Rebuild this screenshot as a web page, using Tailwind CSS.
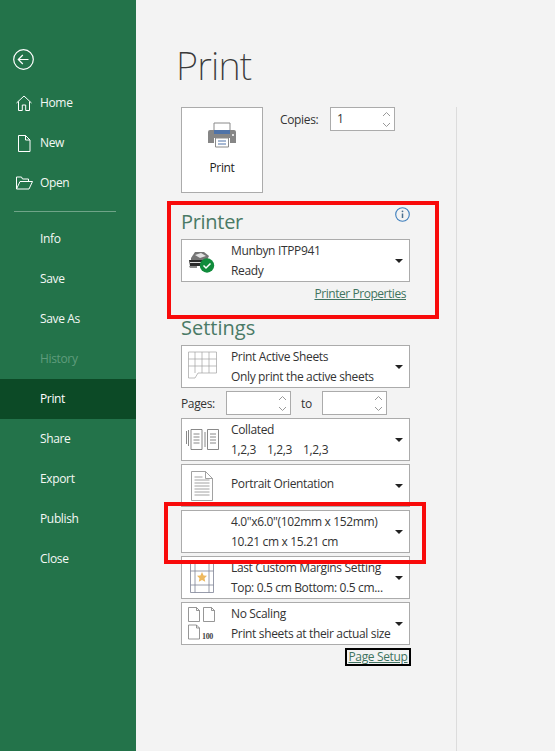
<!DOCTYPE html>
<html lang="en">
<head>
<meta charset="UTF-8">
<title>Print</title>
<script src="https://cdn.jsdelivr.net/npm/@tailwindcss/browser@4"></script>
</head>
<body class="h-[751px] w-[555px] overflow-hidden bg-[#f3f3f3] font-['Open_Sans','Noto_Sans',sans-serif] text-[12px] tracking-[-0.35px] whitespace-nowrap text-[#333]">
<div class="relative flex h-full">

  <!-- sidebar -->
  <nav class="flex h-full w-[136px] shrink-0 flex-col bg-[#23734a] text-[#f4f8f5]">
    <div class="flex h-[83px] items-end pb-[13px] pl-[13px]">
      <svg width="21" height="21" viewBox="0 0 21 21" fill="none" stroke="#fff" stroke-width="1.2"><circle cx="10.5" cy="10.5" r="9.8"/><path d="M15.5 10.5H5.5M9.8 6 5.3 10.5 9.8 15"/></svg>
    </div>
    <a class="flex h-[40px] items-center"><span class="flex w-[40px] pl-[16px]"><svg width="16" height="16" viewBox="0 0 16 16" fill="none" stroke="#fff" stroke-width="1"><path d="M.5 8 8 1l7.500 7M2.500 6.500v9h3.800V10h3.400v5.500h3.800v-9"/></svg></span>Home</a>
    <a class="flex h-[40px] items-center"><span class="flex w-[40px] pl-[17px]"><svg width="14" height="17" viewBox="0 0 14 17" fill="none" stroke="#fff" stroke-width="1"><path d="M1.500 .5h7l4.500 4.500v11.500H1.500zM8.500 .5V5H13"/></svg></span>New</a>
    <a class="flex h-[40px] items-center"><span class="flex w-[40px] pl-[16px]"><svg width="17" height="14" viewBox="0 0 17 14" fill="none" stroke="#fff" stroke-width="1"><path d="M.5 13V1h5l1 2h6v2.500M.5 13h12.500L16.500 5.500H4L.5 13Z"/></svg></span>Open</a>
    <hr class="ml-[14px] mr-[20px] mt-[8px] border-t border-[#6fa488]">
    <div class="flex flex-col pl-[40px] pt-[7px]">
      <a class="flex h-[40px] items-center">Info</a>
      <a class="flex h-[40px] items-center">Save</a>
      <a class="flex h-[40px] items-center">Save As</a>
      <a class="flex h-[40px] items-center text-[#5f9c7c]">History</a>
    </div>
    <a class="flex h-[40px] items-center bg-[#0c4a26] pl-[40px] text-white">Print</a>
    <div class="flex flex-col pl-[40px]">
      <a class="flex h-[40px] items-center">Share</a>
      <a class="flex h-[40px] items-center">Export</a>
      <a class="flex h-[40px] items-center">Publish</a>
      <a class="flex h-[40px] items-center">Close</a>
    </div>
  </nav>

  <!-- main -->
  <main class="flex min-w-0 flex-1 flex-col pl-[41px]">
    <h1 class="-ml-[1px] h-[107px] pt-[35px] font-['Noto_Sans',sans-serif] text-[38px] leading-[60px] font-extralight tracking-[-0.8px] text-[#3a3a3a]">Print</h1>
    <div class="flex-1 w-[280px] border-r border-[#dcdcdc] pl-[4px]">

      <div class="flex">
        <button class="flex h-[86px] w-[82px] flex-col items-center border border-[#ababab] bg-white pt-[14px]">
          <svg width="28" height="26" viewBox="0 0 28 26"><path d="M6 1h16v9H6z" fill="#fff" stroke="#8a8a8a"/><path d="M2 8h24a2 2 0 0 1 2 2v11h-6v-5H6v5H0V10a2 2 0 0 1 2-2z" fill="#868686"/><path d="M6 8h16v4H6z" fill="#4f73a8"/><path d="M7.500 16h13v9h-13z" fill="#fff" stroke="#8a8a8a"/><path d="M10 19h8M10 22h8" stroke="#4f73a8"/><circle cx="25" cy="13" r="1" fill="#fff"/></svg>
          <span class="mt-[11px] text-[#222]">Print</span>
        </button>
        <div class="ml-[17px] flex h-[24px] items-center">
          <span class="w-[50px] pt-[2px]">Copies:</span>
          <div class="flex h-[24px] w-[65px] items-center justify-between border border-[#ababab] bg-white pl-[6px] pr-[3px]">
            <span>1</span>
            <svg width="9" height="19" viewBox="0 0 9 19" fill="none" stroke="#999"><path d="M1 6 4.500 2.500 8 6M1 13l3.500 3.500L8 13"/></svg>
          </div>
        </div>
      </div>

      <h2 class="mt-[16px] h-[30px] text-[20px] leading-[26px] tracking-[-0.3px] text-[#4a7a66]">Printer</h2>
      <button class="flex h-[43px] w-[229px] items-center border border-[#ababab] bg-white text-left">
        <span class="flex w-[49px] justify-center pr-[9px] pt-[2px]">
          <svg width="28" height="22" viewBox="0 0 28 22"><path d="M3 7 7 1h9l5 4-2 4H3z" fill="#757575"/><path d="M7 4l6-2 5 3-6 2z" fill="#e2e2e2"/><path d="M1 9h17v6H2z" fill="#2a2a2a"/><path d="M2 11.500h13" stroke="#dedede"/><path d="M1 15h8v2H2z" fill="#8a8a8a"/><circle cx="19" cy="14.500" r="7.200" fill="#118c3c"/><path d="M15.500 14.500l2.500 2.500 4.500-4.500" stroke="#fff" stroke-width="1.500" fill="none"/></svg>
        </span>
        <span class="flex-1 leading-[20px]"><span class="block">Munbyn ITPP941</span><span class="block">Ready</span></span>
        <svg class="mr-[6px]" width="8" height="4" viewBox="0 0 8 4"><path d="M0 0h8L4 4z" fill="#222"/></svg>
      </button>
      <div class="flex h-[21px] w-[225px] items-end justify-end"><a class="tracking-[-0.45px] text-[#3f7360] underline">Printer Properties</a></div>

      <h2 class="mt-[12px] h-[30px] text-[20px] leading-[26px] tracking-normal text-[#4a7a66]">Settings</h2>
      <button class="flex h-[43px] w-[229px] items-center border border-[#ababab] bg-white text-left">
        <span class="flex w-[49px] justify-center pr-[9px]">
          <svg width="29" height="32" viewBox="0 0 29 32" fill="none" stroke="#a0a0a0" stroke-width=".7"><path d="M.5 1h28v21H10l-3 5H.5zM.5 8h28M.5 15h28M7 1v21M14 1v21M21 1v21"/></svg>
        </span>
        <span class="flex-1 leading-[20px]"><span class="block">Print Active Sheets</span><span class="block">Only print the active sheets</span></span>
        <svg class="mr-[6px]" width="8" height="4" viewBox="0 0 8 4"><path d="M0 0h8L4 4z" fill="#222"/></svg>
      </button>
      <div class="flex h-[30px] items-center">
        <span class="w-[45px] pt-[2px]">Pages:</span>
        <div class="flex h-[24px] w-[65px] items-center justify-end border border-[#ababab] bg-white pr-[3px]"><svg width="9" height="19" viewBox="0 0 9 19" fill="none" stroke="#999"><path d="M1 6 4.500 2.500 8 6M1 13l3.500 3.500L8 13"/></svg></div>
        <span class="w-[31px] pt-[2px] text-center">to</span>
        <div class="flex h-[24px] w-[65px] items-center justify-end border border-[#ababab] bg-white pr-[3px]"><svg width="9" height="19" viewBox="0 0 9 19" fill="none" stroke="#999"><path d="M1 6 4.500 2.500 8 6M1 13l3.500 3.500L8 13"/></svg></div>
      </div>
      <button class="flex h-[43px] w-[229px] items-center border border-[#ababab] bg-white text-left">
        <span class="flex w-[49px] justify-center pr-[9px]">
          <svg width="33" height="21" viewBox="0 0 33 21" fill="none" stroke="#7c7c7c" stroke-width=".9"><path d="M.5 2v13M2.500 1v16M5 .5h11v20H5zM7.500 5h6M7.500 8h6M7.500 11h6M7.500 14h6M19 3v15M21.500 .5h11v20h-11zM24 5h6M24 8h6M24 11h6M24 14h6"/></svg>
        </span>
        <span class="flex-1 leading-[20px]"><span class="block">Collated</span><span class="flex gap-[11px]"><span>1,2,3</span><span>1,2,3</span><span>1,2,3</span></span></span>
        <svg class="mr-[6px]" width="8" height="4" viewBox="0 0 8 4"><path d="M0 0h8L4 4z" fill="#222"/></svg>
      </button>
      <button class="mt-[3px] flex h-[43px] w-[229px] items-center border border-[#ababab] bg-white text-left">
        <span class="flex w-[49px] justify-center pr-[9px]">
          <svg width="22" height="30" viewBox="0 0 22 30" fill="none" stroke="#8a8a8a" stroke-width=".8"><path d="M.5 .5h14l7 7v22H.5zM14.500 .5v7h7M3.500 6h8M3.500 9h15M3.500 12h15M3.500 15h15M3.500 18h15M3.500 21h15M3.500 24h15"/></svg>
        </span>
        <span class="flex-1 pb-[4px]">Portrait Orientation</span>
        <svg class="mr-[6px]" width="8" height="4" viewBox="0 0 8 4"><path d="M0 0h8L4 4z" fill="#222"/></svg>
      </button>
      <button class="mt-[3px] flex h-[43px] w-[229px] items-center border border-[#ababab] bg-white text-left">
        <span class="w-[49px]"></span>
        <span class="flex-1 leading-[20px]"><span class="block">4.0"x6.0"(102mm x 152mm)</span><span class="block">10.21 cm x 15.21 cm</span></span>
        <svg class="mr-[6px]" width="8" height="4" viewBox="0 0 8 4"><path d="M0 0h8L4 4z" fill="#222"/></svg>
      </button>
      <button class="mt-[3px] flex h-[43px] w-[229px] items-center border border-[#ababab] bg-white text-left">
        <span class="flex w-[49px] justify-center pr-[9px]">
          <svg width="24" height="30" viewBox="0 0 24 30" fill="none" stroke="#7d8396" stroke-width=".8"><path d="M.5 .5h23v29H.5zM.5 8h23M.5 22h23M5 .5v29M19 .5v29"/><path d="M12 9l1.600 3.400 3.400.4-2.500 2.400.7 3.600-3.200-1.800-3.200 1.800.7-3.600L7 12.800l3.400-.4z" fill="#eeb95f" stroke="none"/></svg>
        </span>
        <span class="flex-1 leading-[20px]"><span class="block">Last Custom Margins Setting</span><span class="block">Top: 0.5 cm Bottom: 0.5 cm...</span></span>
        <svg class="mr-[6px]" width="8" height="4" viewBox="0 0 8 4"><path d="M0 0h8L4 4z" fill="#222"/></svg>
      </button>
      <button class="mt-[3px] flex h-[43px] w-[229px] items-center border border-[#ababab] bg-white text-left">
        <span class="flex w-[49px] justify-center pr-[9px]">
          <svg width="28" height="34" viewBox="0 0 28 34" fill="none" stroke="#7c7c7c" stroke-width=".8"><path d="M.5 .5h8l3 3v11H.5zM8.500 .5v3h3M15.500 .5h8l3 3v11h-11zM23.500 .5v3h3M.5 18h8l3 3v11H.5zM8.500 18v3h3"/><text x="14" y="32" stroke="none" fill="#444" font-size="8" font-weight="700" font-family="Liberation Serif, serif">100</text></svg>
        </span>
        <span class="flex-1 leading-[20px]"><span class="block">No Scaling</span><span class="block">Print sheets at their actual size</span></span>
        <svg class="mr-[6px]" width="8" height="4" viewBox="0 0 8 4"><path d="M0 0h8L4 4z" fill="#222"/></svg>
      </button>
      <div class="mt-[3px] flex w-[230px] justify-end"><a class="flex h-[18px] w-[66px] items-center justify-center border-2 border-black text-[#3f7360] underline">Page Setup</a></div>
    </div>
  </main>

  <!-- annotations over the screenshot -->
  <svg class="absolute left-[395px] top-[207px]" width="15" height="15" viewBox="0 0 15 15" fill="none"><circle cx="7.500" cy="7.500" r="6.800" stroke="#3f7fbd" stroke-width="1.100"/><path d="M7.500 6.500v4.500" stroke="#4a6f8f" stroke-width="1.500"/><circle cx="7.500" cy="4.300" r=".9" fill="#4a6f8f"/></svg>
  <div class="absolute left-[167px] top-[201px] h-[118px] w-[272px] border-[4px] border-[#f80a0a]"></div>
  <div class="absolute left-[164px] top-[502px] h-[62px] w-[262px] border-[4px] border-[#f80a0a]"></div>
</div>
</body>
</html>
